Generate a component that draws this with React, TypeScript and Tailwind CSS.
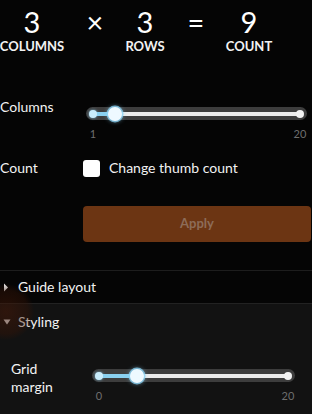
import React from "react";

function Slider({ span, frac, min, max }: { span: number; frac: number; min: string; max: string }) {
  const thumb = 7 + span * frac;
  return (
    <div className="flex flex-col" style={{ width: span + 14 }}>
      <div className="relative h-[13px] w-full rounded-full bg-[#3d3d3d]">
        <div className="absolute left-[7px] right-[7px] top-[4.5px] h-[4px] rounded-full bg-[#ececec]" />
        <div
          className="absolute left-[7px] top-[4.5px] h-[4px] bg-[#8ad0ef]"
          style={{ width: span * frac }}
        />
        <div className="absolute left-[3px] top-[2.5px] h-[8px] w-[8px] rounded-full bg-[#c9ecfb] shadow-[0_0_3px_rgba(140,210,245,0.8)]" />
        <div className="absolute right-[3px] top-[2.5px] h-[8px] w-[8px] rounded-full bg-[#f2f2f2]" />
        <div
          className="absolute top-[-0.5px] h-[14px] w-[14px] rounded-full bg-[#eef9ff] shadow-[0_0_0_1.5px_rgba(140,212,245,0.75),0_0_5px_rgba(140,212,245,0.9)]"
          style={{ left: thumb - 7 }}
        />
      </div>
      <div className="mt-[7px] flex justify-between text-[11px] leading-[14px] text-[#6e6e6e]">
        <span className="w-[14px] text-center">{min}</span>
        <span className="w-[14px] text-center">{max}</span>
      </div>
    </div>
  );
}

function Stat({ w, n, label }: { w: number; n: string; label: string }) {
  return (
    <div className="flex flex-col items-center" style={{ width: w }}>
      <div className="text-[29px] leading-[34px] text-white">{n}</div>
      <div className="-mt-[1px] whitespace-nowrap text-[13px] font-bold leading-[16px] text-[#f2f2f2]">{label}</div>
    </div>
  );
}

export default function App() {
  return (
    <div className="relative h-[414px] w-[312px] overflow-hidden bg-[#050505] font-['Lato',sans-serif] text-[#f2f2f2]">
      {/* header */}
      <div className="flex pt-[5px]">
        <Stat w={64} n="3" label="COLUMNS" />
        <div className="flex w-[62px] justify-center text-[29px] leading-[34px] text-white">×</div>
        <Stat w={38} n="3" label="ROWS" />
        <div className="flex w-[64px] justify-center text-[29px] leading-[34px] text-white">=</div>
        <Stat w={42} n="9" label="COUNT" />
      </div>

      {/* columns slider */}
      <div className="mt-[43px] flex items-start">
        <div className="w-[86px] text-[14px] leading-[20px]">Columns</div>
        <div className="mt-[10px]">
          <Slider span={207} frac={2 / 19} min="1" max="20" />
        </div>
      </div>

      {/* count */}
      <div className="mt-[17px] flex h-[20px] items-center">
        <div className="w-[83px] text-[14px] leading-[20px]">Count</div>
        <div className="h-[17px] w-[17px] rounded-[3px] bg-white" />
        <div className="ml-[9px] text-[14px] leading-[20px]">Change thumb count</div>
      </div>

      {/* apply */}
      <div className="mt-[28px] pl-[83px] pr-[1px]">
        <button className="flex h-[36px] w-full items-center justify-center rounded-[4px] bg-[#6c3513] text-[13px] font-bold text-[#8d6c58]">
          Apply
        </button>
      </div>

      {/* sections */}
      <div className="mt-[28px] border-t border-[#1d1d1d]">
        <div className="flex h-[32px] items-center gap-[8px] pl-[3px]">
          <svg width="6" height="9" viewBox="0 0 6 9">
            <path d="M1 0.5 L5 4.5 L1 8.5 Z" fill="#f0f0f0" />
          </svg>
          <span className="pl-[1px] text-[14px] leading-[20px]">Guide layout</span>
        </div>
      </div>
      <div className="border-t border-[#222] bg-[#121212] pb-[40px]">
        <div className="flex h-[35px] items-center gap-[7px] pl-[3px]">
          <svg width="8" height="6" viewBox="0 0 8 6">
            <path d="M0.5 0.5 L7.5 0.5 L4 5.5 Z" fill="#f0f0f0" />
          </svg>
          <span className="text-[14px] leading-[20px]">Styling</span>
        </div>
        <div className="mt-[21px] flex items-start pl-[11px]">
          <div className="w-[81px] text-[14px] leading-[18px]">
            Grid
            <br />
            margin
          </div>
          <div className="mt-[9px]">
            <Slider span={189} frac={4 / 20} min="0" max="20" />
          </div>
        </div>
      </div>

      {/* ripple glow */}
      <div className="pointer-events-none absolute left-[-22px] top-[284px] h-[56px] w-[56px] rounded-full bg-[radial-gradient(circle,rgba(70,25,8,0.55)_0%,rgba(55,20,6,0.4)_55%,transparent_72%)]" />
    </div>
  );
}
